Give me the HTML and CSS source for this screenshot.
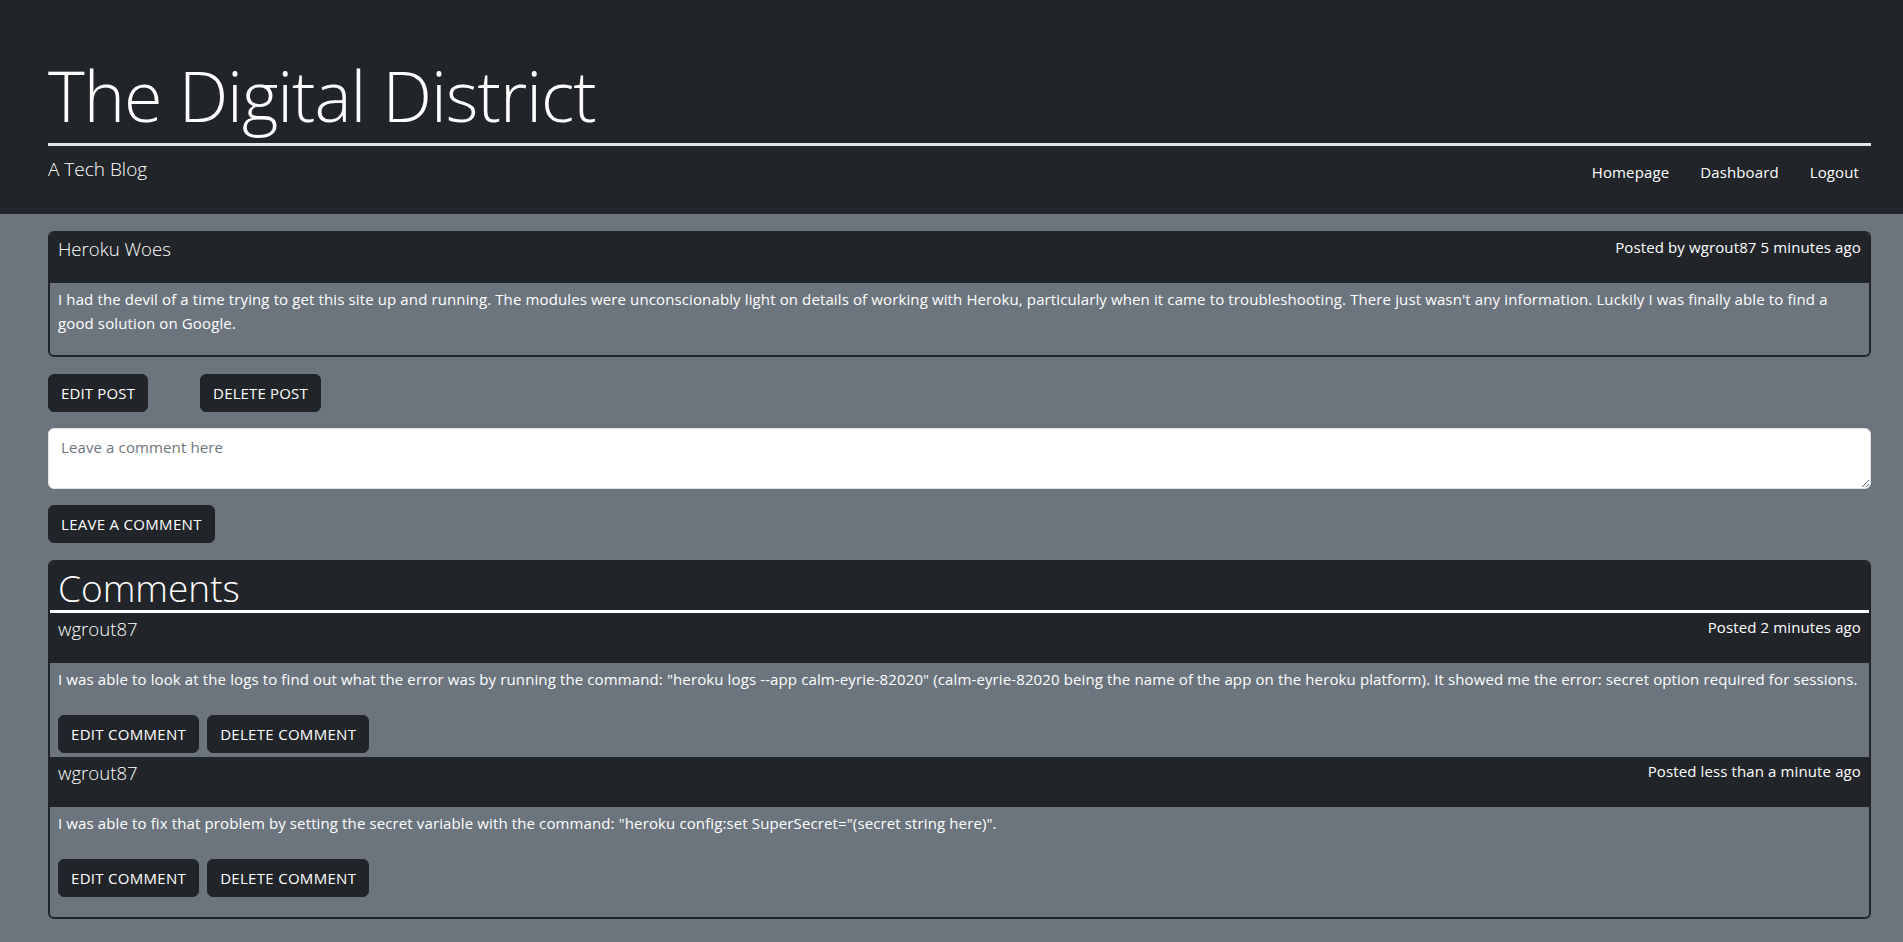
FILE: index.html
```html
<!DOCTYPE html>
<html lang="en">
<head>
<meta charset="utf-8">
<title>The Digital District</title>
<link rel="stylesheet" href="styles.css">
</head>
<body>
<header class="site-header">
  <h1 class="site-title">The Digital District</h1>
  <div class="subbar">
    <p class="tagline">A Tech Blog</p>
    <nav class="nav">
      <a class="nav-link" href="#">Homepage</a>
      <a class="nav-link" href="#">Dashboard</a>
      <a class="nav-link" href="#">Logout</a>
    </nav>
  </div>
</header>
<main class="page">
  <article class="card post">
    <div class="card-head">
      <h2 class="card-title">Heroku Woes</h2>
      <span class="meta">Posted by wgrout87 5 minutes ago</span>
    </div>
    <div class="post-body">
      <p>I had the devil of a time trying to get this site up and running. The modules were unconscionably light on details of working with Heroku, particularly when it came to troubleshooting. There just wasn't any information. Luckily I was finally able to find a good solution on Google.</p>
    </div>
  </article>
  <div class="post-actions">
    <button class="btn" type="button">EDIT POST</button>
    <button class="btn" type="button">DELETE POST</button>
  </div>
  <textarea class="comment-input" placeholder="Leave a comment here"></textarea>
  <button class="btn btn-submit" type="button">LEAVE A COMMENT</button>
  <section class="card comments">
    <h2 class="comments-title">Comments</h2>
    <div class="comment">
      <div class="card-head">
        <h3 class="card-title">wgrout87</h3>
        <span class="meta">Posted 2 minutes ago</span>
      </div>
      <div class="comment-body">
        <p>I was able to look at the logs to find out what the error was by running the command: "heroku logs --app calm-eyrie-82020" (calm-eyrie-82020 being the name of the app on the heroku platform). It showed me the error: secret option required for sessions.</p>
        <div class="comment-actions">
          <button class="btn" type="button">EDIT COMMENT</button>
          <button class="btn" type="button">DELETE COMMENT</button>
        </div>
      </div>
    </div>
    <div class="comment">
      <div class="card-head">
        <h3 class="card-title">wgrout87</h3>
        <span class="meta">Posted less than a minute ago</span>
      </div>
      <div class="comment-body">
        <p>I was able to fix that problem by setting the secret variable with the command: "heroku config:set SuperSecret="(secret string here)".</p>
        <div class="comment-actions">
          <button class="btn" type="button">EDIT COMMENT</button>
          <button class="btn" type="button">DELETE COMMENT</button>
        </div>
      </div>
    </div>
  </section>
</main>
</body>
</html>
```
FILE: styles.css
```css
html, body {
  margin: 0;
  padding: 0;
}

body {
  background: #6c757d;
  color: #fff;
  font-family: "Open Sans", "Noto Sans", sans-serif;
  font-size: 15px;
  line-height: 24px;
  letter-spacing: 0.12px;
}

.site-header {
  background: #212529;
  padding: 51px 32px 0 48px;
}

.site-title {
  margin: 0;
  font-size: 70px;
  font-weight: 300;
  line-height: 88px;
  letter-spacing: -1px;
  padding-bottom: 4px;
  border-bottom: 3px solid #e3e6e9;
}

.subbar {
  display: flex;
  justify-content: space-between;
  align-items: flex-start;
  padding: 11px 0 30px;
}

.tagline {
  margin: 0;
  font-size: 19px;
  font-weight: 300;
  line-height: 24px;
  letter-spacing: 0;
}

.nav {
  display: flex;
  gap: 31px;
  padding: 3px 12px 0 0;
}

.nav-link {
  color: #fff;
  text-decoration: none;
  font-size: 15px;
  line-height: 24px;
}

.page {
  padding: 17px 32px 26px 48px;
}

.card {
  border: 2px solid #212529;
  border-radius: 6px;
  overflow: hidden;
}

.card-head {
  background: #212529;
  display: flex;
  justify-content: space-between;
  align-items: flex-start;
  padding: 4px 8px 22px;
}

.card-title {
  margin: 0;
  font-size: 18.6px;
  font-weight: 300;
  line-height: 24px;
  letter-spacing: 0;
}

.meta {
  font-size: 15px;
  line-height: 20px;
}

.post-body {
  padding: 4px 8px 4px;
}

.post-body p {
  margin: 0 0 16px;
}

.post-actions {
  display: flex;
  gap: 52px;
  margin-top: 17px;
}

.btn {
  background: #212529;
  color: #fff;
  border: 1px solid #212529;
  border-radius: 6px;
  padding: 6px 12px;
  font-family: inherit;
  font-size: 15px;
  line-height: 24px;
  letter-spacing: 0.3px;
  cursor: pointer;
}

.post-actions .btn {
  letter-spacing: 0.15px;
}

.comment-input {
  display: block;
  box-sizing: border-box;
  width: 100%;
  height: 61px;
  margin-top: 16px;
  padding: 6px 12px;
  border: 1px solid #dee2e6;
  border-radius: 6px;
  background: #fff;
  color: #212529;
  font-family: inherit;
  font-size: 15px;
  line-height: 24px;
  letter-spacing: 0.12px;
}

.comment-input::placeholder {
  color: #6c757d;
}

.btn-submit {
  margin-top: 16px;
}

.comments {
  margin-top: 17px;
  padding-bottom: 16px;
}

.comments-title {
  margin: 0;
  background: #212529;
  font-size: 37px;
  font-weight: 300;
  line-height: 44px;
  letter-spacing: 0;
  padding: 4px 8px 0;
  border-bottom: 3px solid #fff;
}

.comment-body {
  padding: 4px 8px 4px;
}

.comment-body p {
  margin: 0 0 24px;
}

.comment-actions {
  display: flex;
  gap: 8px;
}
```
